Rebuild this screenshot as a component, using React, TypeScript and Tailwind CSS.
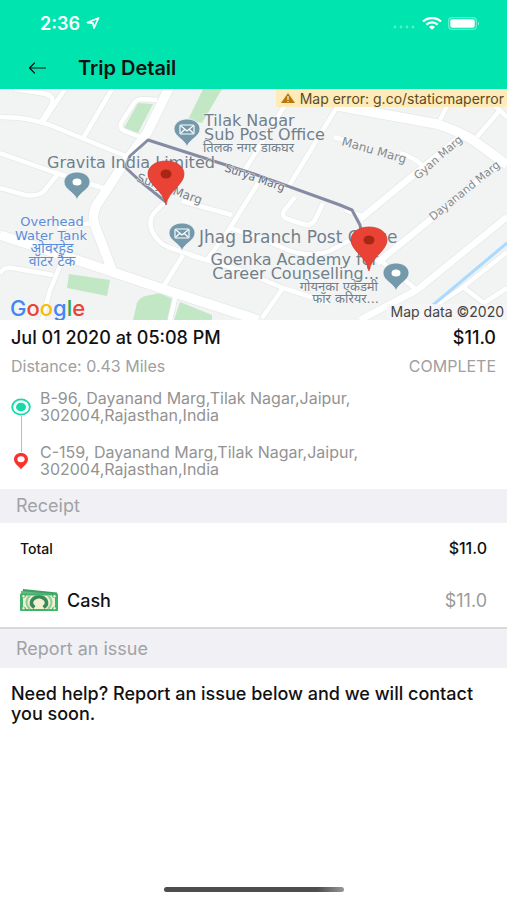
import { ReactNode } from 'react';

type Label = {
  text: string;
  x: number;
  y: number;
  size: number;
  rotate?: number;
  anchor?: 'start' | 'middle' | 'end';
  color?: string;
};

const mapLabels: Label[] = [
  { text: 'Tilak Nagar', x: 204, y: 37, size: 16 },
  { text: 'Sub Post Office', x: 204, y: 51, size: 16 },
  { text: 'तिलक नगर डाकघर', x: 203, y: 63, size: 13 },
  { text: 'Gravita India Limited', x: 47, y: 79, size: 16 },
  { text: 'Jhag Branch Post Office', x: 199, y: 154, size: 17 },
  { text: 'Goenka Academy for', x: 378, y: 176, size: 16, anchor: 'end' },
  { text: 'Career Counselling...', x: 379, y: 190, size: 16, anchor: 'end' },
  { text: 'गोयनका एकेडमी', x: 378, y: 202, size: 13, anchor: 'end' },
  { text: 'फॉर करियर...', x: 379, y: 214, size: 13, anchor: 'end' },
  { text: 'Overhead', x: 52, y: 137, size: 13, anchor: 'middle', color: '#5b8dd9' },
  { text: 'Water Tank', x: 51, y: 151, size: 13, anchor: 'middle', color: '#5b8dd9' },
  { text: 'ओवरहेड', x: 52, y: 164, size: 14, anchor: 'middle', color: '#5b8dd9' },
  { text: 'वॉटर टैंक', x: 52, y: 177, size: 14, anchor: 'middle', color: '#5b8dd9' },
  { text: 'Manu Marg', x: 341, y: 56, size: 12, rotate: 16, color: '#85898d' },
  { text: 'Gyan Marg', x: 418, y: 91, size: 11, rotate: -41, color: '#85898d' },
  { text: 'Dayanand Marg', x: 433, y: 132, size: 11, rotate: -39, color: '#85898d' },
  { text: 'Surya Marg', x: 224, y: 82, size: 11, rotate: 19, color: '#666b78' },
  { text: 'Surya Marg', x: 136, y: 92, size: 12, rotate: 20, color: '#7d8186' },
];

const streets = [
  'M43 33 65 0',
  'M82 51 112 0',
  'M0 28C20 28 30 30 50 36L128 68',
  'M15 0 46 5Q56 8 51 17L41 33',
  'M157 11 142 10Q137 10 134 14L121 34Q119 41 127 43L140 48',
  'M0 64 53 83 103 99',
  'M57 86 44 102Q38 108 25 106L0 99',
  'M58 139 92 134',
  'M0 184Q4 178 12 179L53 186',
  'M62 172 50 201 42 231',
  'M166 112 154 124Q148 132 152 142Q158 154 168 158L200 169',
  'M183 166 163 198',
  'M182 112 232 126',
  'M290 8 243 84',
  'M258 94 230 139 207 171',
  'M337 18 287 100',
  'M295 108 284 122Q280 128 290 131L306 136Q312 136 315 131L323 114',
  'M230 139 257 148 288 161Q310 169 330 162L350 151',
  'M190 166 240 181 283 199 330 214',
  'M283 199 262 229',
  'M334 48 360 56M400 64Q418 70 423 78',
  'M440 31 448 15',
  'M477 48 501 20M488 10 507 28',
  'M345 121 362 127',
  'M380 171 417 201',
  'M463 198 484 214 507 199',
  'M507 163 462 199 414 231',
  'M176 205 170 231',
];

const avenues = ['M460 48 360 130', 'M500 74 377 174', 'M507 128 417 201 360 231'];

const wideAvenues = [
  'M170 -3 147 44 123 76 96 117Q92 126 94 134L112 181',
  'M0 146 83 173 160 199 258 231',
  'M338 17 437 35Q458 42 473 51L507 76',
];

function MapPoi({ x, y, children }: { x: number; y: number; children?: ReactNode }) {
  return (
    <g transform={`translate(${x} ${y})`}>
      <path
        d="M0 17C-2 9-13 7-13-1C-13-7-7-11 0-11S13-7 13-1C13 7 2 9 0 17Z"
        fill="#7399ab"
        stroke="#f4f6f7"
        strokeWidth="0.8"
      />
      {children ?? <ellipse cx="0" cy="-1" rx="4.5" ry="3.5" fill="#fff" />}
    </g>
  );
}

function Envelope() {
  return (
    <g fill="none" stroke="#fff" strokeWidth="1.2">
      <rect x="-7" y="-5" width="14" height="9" rx="1" />
      <path d="m-6-4 6 5 6-5M-6 3l4-4M6 3 2-1" />
    </g>
  );
}

function RedPin({ x, y }: { x: number; y: number }) {
  return (
    <g transform={`translate(${x} ${y})`}>
      <path
        d="M0 31C-2 17-18 11-18 0C-18-8-10-13 0-13S18-8 18 0C18 11 2 17 0 31Z"
        fill="#ea4335"
        stroke="#c9372b"
        strokeWidth="0.7"
      />
      <ellipse cx="0" cy="0" rx="5.5" ry="4.5" fill="#a52714" />
    </g>
  );
}

function TripMap() {
  return (
    <section
      aria-label="Trip route"
      className="relative h-[231px] overflow-hidden bg-[#f2f3f3] font-['DejaVu_Sans','Noto_Sans',sans-serif]"
    >
      <svg viewBox="0 0 507 231" preserveAspectRatio="xMidYMid slice" className="block h-full w-full">
        <g fill="#c2e7c5">
          <path d="M138 14 153 15 138 44 124 39Z" />
          <path d="M203 0H222L202 34 188 31Z" />
          <path d="M69 185 110 191 107 207 67 199Z" />
          <path d="M133 231 137 214Q140 208 146 207L160 204 174 211 170 231Z" />
          <path d="M180 213 212 226V231H174Z" />
        </g>
        <g fill="none" strokeLinejoin="round">
          <g stroke="#e6e8e9">
            {streets.map((d) => <path key={d} d={d} strokeWidth="6" />)}
            {avenues.map((d) => <path key={d} d={d} strokeWidth="8" />)}
            {wideAvenues.map((d) => <path key={d} d={d} strokeWidth="11" />)}
          </g>
          <g stroke="#fff">
            {streets.map((d) => <path key={d} d={d} strokeWidth="4.5" />)}
            {avenues.map((d) => <path key={d} d={d} strokeWidth="6.5" />)}
            {wideAvenues.map((d) => <path key={d} d={d} strokeWidth="9.5" />)}
          </g>
          <path d="M507 154 433 216" stroke="#aadaff" strokeWidth="3" />
          <path
            d="M166 113 140 92 125 78 130 67 148 51 254 85 340 116 352 121 360 136 369 180"
            stroke="#858ba3"
            strokeWidth="3"
          />
        </g>
        {mapLabels.map((l) => (
          <text
            key={`${l.text}-${l.x}`}
            x={l.x}
            y={l.y}
            fontSize={l.size}
            textAnchor={l.anchor ?? 'start'}
            fill={l.color ?? '#71808a'}
            stroke="#f5f6f7"
            strokeWidth="1.5"
            strokeOpacity="0.7"
            paintOrder="stroke"
            transform={l.rotate ? `rotate(${l.rotate} ${l.x} ${l.y})` : undefined}
          >
            {l.text}
          </text>
        ))}
        <MapPoi x={187} y={41}><Envelope /></MapPoi>
        <MapPoi x={77} y={94} />
        <MapPoi x={182} y={145}><Envelope /></MapPoi>
        <MapPoi x={396} y={185} />
        <RedPin x={166} y={85} />
        <RedPin x={369} y={151} />
      </svg>

      <p className="absolute top-0 right-0 flex h-[18px] items-center gap-1 bg-[#fdebb9] pr-[3px] pl-1 font-[Inter,sans-serif] text-[14px] text-[#5f4a1e]">
        <svg viewBox="0 0 16 12" className="h-3 w-4" aria-hidden="true">
          <path d="M8 1 15 11H1Z" fill="#b9770e" />
          <path d="M8 4V8M8 9V10" stroke="#fdebb9" strokeWidth="1.3" />
        </svg>
        Map error: g.co/staticmaperror
      </p>
      <p className="absolute right-0 bottom-0 bg-[#f5f5f5]/80 pr-[3px] pl-1 font-[Inter,sans-serif] text-[14px] leading-4 text-[#444]">
        Map data ©2020
      </p>
      <p
        className="absolute bottom-0 left-[10px] font-[Inter,sans-serif] text-[22px] leading-6 font-medium"
        aria-label="Google"
      >
        <span className="text-[#4285f4]">G</span>
        <span className="text-[#ea4335]">o</span>
        <span className="text-[#fbbc05]">o</span>
        <span className="text-[#4285f4]">g</span>
        <span className="text-[#34a853]">l</span>
        <span className="text-[#ea4335]">e</span>
      </p>
    </section>
  );
}

function StatusBar() {
  return (
    <div className="flex h-[46px] items-center justify-between pr-[27px] pl-10 text-white">
      <div className="flex items-center gap-[6px]">
        <span className="text-[18px] font-semibold">2:36</span>
        <svg viewBox="0 0 14 12" className="h-3 w-[14px]" aria-hidden="true">
          <path d="M12.5 1 8 11 7 6.2 1.5 5.5Z" fill="none" stroke="#fff" strokeWidth="1.8" strokeLinejoin="round" />
        </svg>
      </div>
      <div className="flex items-center gap-[6px]">
        <svg viewBox="0 0 24 12" className="h-3 w-6" fill="#fff" fillOpacity="0.35" aria-hidden="true">
          <circle cx="3" cy="10" r="1.4" />
          <circle cx="9" cy="10" r="1.4" />
          <circle cx="15" cy="10" r="1.4" />
          <circle cx="21" cy="10" r="1.4" />
        </svg>
        <svg viewBox="0 0 20 13" className="h-[13px] w-5" fill="none" stroke="#fff" aria-hidden="true">
          <path d="M1 4.5C6-.2 14-.2 19 4.5" strokeWidth="2.3" />
          <path d="M4.3 7.6C7.5 4.6 12.5 4.6 15.7 7.6" strokeWidth="2.2" />
          <path d="M7 10C8.6 8.2 11.4 8.2 13 10L10 12.8Z" fill="#fff" stroke="none" />
        </svg>
        <svg viewBox="0 0 32 13" className="h-[13px] w-8" aria-hidden="true">
          <rect x="0.6" y="0.6" width="27.8" height="11.8" rx="3.5" fill="none" stroke="#fff" strokeOpacity="0.4" strokeWidth="1.2" />
          <rect x="2.3" y="2.2" width="24.4" height="8.6" rx="2" fill="#fff" />
          <path d="M30 4.5Q32 6.5 30 8.5Z" fill="#fff" fillOpacity="0.55" />
        </svg>
      </div>
    </div>
  );
}

function CashIcon() {
  return (
    <svg viewBox="0 0 38 22" className="h-[22px] w-[38px]" aria-hidden="true">
      <path d="M3 0 37 3.5V10H1Z" fill="#3c9f66" />
      <path d="M1 2 37 5.5V10H1Z" fill="#67b983" />
      <rect y="4.5" width="38" height="17.5" rx="0.8" fill="#3fb36c" />
      <path d="M6 6.5H32Q32 9 35 9V17.5Q32 17.5 32 20H6Q6 17.5 3 17.5V9Q6 9 6 6.5Z" fill="#f3f0cf" />
      <path d="M10 6.5Q3 13 10 20M28 6.5Q35 13 28 20" fill="none" stroke="#8fce9d" strokeWidth="2" />
      <path
        d="M14.5 18.5Q10 15.5 12 11.5Q14 8 19 8T26 11.5Q28 15.5 23.5 18.5"
        fill="none"
        stroke="#37895c"
        strokeWidth="3.6"
      />
      <ellipse cx="19" cy="13.5" rx="3.8" ry="4" fill="#f3f0cf" />
      <path d="M13.5 20Q15 17 19 17T24.5 20Z" fill="#f3f0cf" />
      <g fill="#f3f0cf">
        <circle cx="3.5" cy="7.2" r="1.2" />
        <circle cx="34.5" cy="7.2" r="1.2" />
        <circle cx="3.5" cy="19.3" r="1.2" />
        <circle cx="34.5" cy="19.3" r="1.2" />
      </g>
    </svg>
  );
}

export default function App() {
  return (
    <main className="flex min-h-screen flex-col bg-white font-[Inter,'Noto_Sans',sans-serif] text-[#111]">
      <header className="bg-[#00e5b0]">
        <StatusBar />
        <div className="flex h-[43px] items-center gap-[30px] pl-7">
          <button type="button" aria-label="Back">
            <svg viewBox="0 0 20 14" className="h-[14px] w-5" fill="none" stroke="#111" strokeWidth="1.2" aria-hidden="true">
              <path d="M17.5 7H1.5M6.5 2 1.5 7 6.5 12" strokeLinecap="round" strokeLinejoin="round" />
            </svg>
          </button>
          <h1 className="text-[20px] font-semibold">Trip Detail</h1>
        </div>
      </header>

      <TripMap />

      {/* Summary */}
      <section className="px-[11px] pt-[6px] pb-[11px]">
        <div className="flex justify-between text-[18px] leading-6 font-medium">
          <h2>Jul 01 2020 at 05:08 PM</h2>
          <span>$11.0</span>
        </div>
        <div className="mt-1 flex justify-between text-[16px] leading-6 text-[#a0a0a0]">
          <span>Distance: 0.43 Miles</span>
          <span>COMPLETE</span>
        </div>

        <div className="mt-3 flex gap-[9px]">
          <div className="flex flex-col items-center py-2">
            <svg viewBox="0 0 20 18" className="h-[18px] w-5" aria-hidden="true">
              <ellipse cx="10" cy="9" rx="8.8" ry="7.6" fill="none" stroke="#12dba8" strokeWidth="1.8" />
              <ellipse cx="10" cy="9" rx="5" ry="4.3" fill="#12dba8" />
            </svg>
            <span className="w-px grow bg-[#bdbdbd]" />
            <svg viewBox="0 0 14 18" className="h-[18px] w-[14px]" aria-hidden="true">
              <path d="M7 17.5C6 15 0 12 0 7.500C0 3.500 3 1 7 1S14 3.500 14 7.500C14 12 8 15 7 17.500Z" fill="#f9322c" />
              <ellipse cx="7" cy="7.2" rx="3.6" ry="3" fill="#fff" />
            </svg>
          </div>
          <div className="flex flex-col gap-5 text-[16px] leading-[17px] text-[#939393]">
            <p>
              B-96, Dayanand Marg,Tilak Nagar,Jaipur,
              <br />
              302004,Rajasthan,India
            </p>
            <p>
              C-159, Dayanand Marg,Tilak Nagar,Jaipur,
              <br />
              302004,Rajasthan,India
            </p>
          </div>
        </div>
      </section>

      {/* Receipt */}
      <section className="border-b-2 border-[#d9d9dc]">
        <h2 className="bg-[#f0f0f5] px-4 text-[18px] leading-[34px] text-[#a2a2a7]">Receipt</h2>
        <dl className="px-5">
          <div className="flex h-[50px] items-center justify-between">
            <dt className="text-[14px] font-medium">Total</dt>
            <dd className="text-[16px] font-medium">$11.0</dd>
          </div>
          <div className="flex h-[54px] items-center justify-between">
            <dt className="flex items-center gap-[9px] text-[18px] font-medium">
              <CashIcon />
              Cash
            </dt>
            <dd className="text-[18px] text-[#9b9b9b]">$11.0</dd>
          </div>
        </dl>
      </section>

      {/* Help */}
      <section>
        <h2 className="bg-[#f0f0f5] px-4 text-[18px] leading-[39px] text-[#a2a2a7]">Report an issue</h2>
        <p className="px-[11px] pt-4 text-[18px] leading-5 font-medium">
          Need help? Report an issue below and we will contact you soon.
        </p>
      </section>

      <div className="mx-auto mt-auto mb-2 h-[5px] w-[180px] rounded-full bg-linear-to-r from-[#4d4d4d] from-85% to-[#999]" />
    </main>
  );
}
